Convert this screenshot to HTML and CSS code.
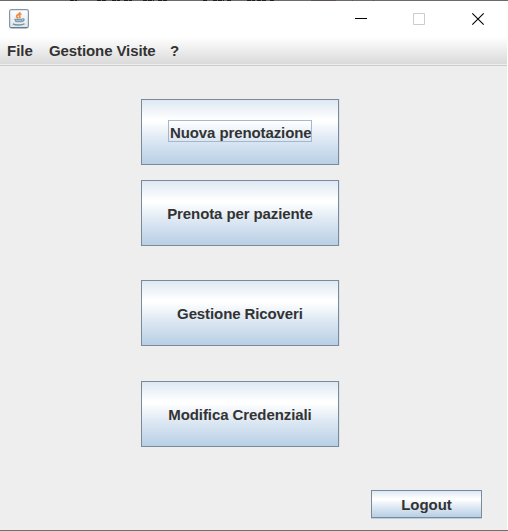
FILE: index.html
```html
<!DOCTYPE html>
<html lang="it">
<head>
<meta charset="utf-8">
<title>Gestione Visite</title>
<link rel="stylesheet" href="styles.css">
</head>
<body>
<div class="window">
  <svg class="top-edge" width="508" height="1" viewBox="0 0 508 1">
    <path d="M0 .5h508" stroke="#6d6a6b"/>
    <path d="M70 .5h7M97 .5h10M112 .5h8M124 .5h8M143 .5h11M158 .5h9M203 .5h4M213 .5h11M227 .5h4M247 .5h8M257 .5h10M270 .5h5" stroke="#211d20" stroke-dasharray="4 1"/>
    <path d="M311 .5h25M352 .5h1M373 .5h1" stroke="#5a5153"/>
  </svg>
  <header class="titlebar">
    <svg class="app-icon" width="20" height="20" viewBox="0 0 20 20">
      <defs><linearGradient id="tile" x2="0" y2="1"><stop offset="0" stop-color="#fff"/><stop offset="1" stop-color="#dfe5e9"/></linearGradient></defs>
      <rect x=".6" y=".6" width="18.8" height="18.3" rx="1.8" fill="url(#tile)" stroke="#8298a9" stroke-width="1.2"/>
      <path d="M1.5 18.6h17" stroke="#5e788c" stroke-width="1"/>
      <path d="M10.800 3c1 2-3.300 2.600-3.300 4.300 0 1 1.500 1.300 1.700 2.200M12.500 5c-2.500 1-2.500 1.800-1.700 2.500.5.700.2 1.200-.4 1.700" fill="none" stroke="#ee8b45" stroke-width="1.600"/>
      <path d="M5 9.800h8.500l-1 3.400h-6z" fill="#7e9bb0"/>
      <path d="M13.300 10c2.800-.7 2 2.300-.8 2.500M3.800 14.800c2.500 1.600 9.500 1.600 11.700 0" fill="none" stroke="#7893a8" stroke-width="1.400"/>
      <path d="M7 11.500h5" stroke="#a9bdcb"/>
    </svg>
    <svg class="controls" width="124" height="14" viewBox="0 0 124 14" fill="none">
      <path d="M0 6.500h12" stroke="#000"/>
      <path d="M58.500 1.500h11v11h-11z" stroke="#ccc"/>
      <path d="M117.300 1.300l11.400 11.400M128.700 1.300l-11.400 11.400" stroke="#000" stroke-width="1.100"/>
    </svg>
  </header>
  <nav class="menubar"><span class="menu-file">File</span><span class="menu-visits">Gestione Visite</span><span>?</span></nav>
  <main class="content">
    <button class="btn first"><span class="focus">Nuova prenotazione</span></button>
    <button class="btn second"><span>Prenota per paziente</span></button>
    <button class="btn third"><span>Gestione Ricoveri</span></button>
    <button class="btn fourth"><span>Modifica Credenziali</span></button>
    <button class="btn logout"><span>Logout</span></button>
  </main>
</div>
</body>
</html>
```
FILE: styles.css
```css
* { box-sizing: border-box; }
body { margin: 0; background: #fff; overflow: hidden; }
.window {
  width: 508px; height: 531px;
  display: flex; flex-direction: column;
  border-bottom: 1px solid #707070;
  font: bold 15px/20px "Liberation Sans", Arial, sans-serif;
  color: #333;
}
.top-edge { display: block; flex: none; }
.titlebar { height: 36px; flex: none; display: flex; justify-content: space-between; padding: 8px 24px 0 9px; }
.controls { margin-top: 3px; margin-right: 5px; overflow: visible; }
.menubar {
  height: 29px; flex: none; display: flex; padding: 4px 7px 0; margin-right: 1px;
  background: linear-gradient(#fff, #dadada 27px, #eee 27px, #eee 28px, #ccc 28px);
}
.menu-file { width: 42px; }
.menu-visits { width: 121px; letter-spacing: -.1px; }
.content {
  flex: 1; background: #eee; margin-right: 1px;
  display: flex; flex-direction: column; align-items: flex-start;
  padding: 33px 25px 0 141px;
}
.btn {
  width: 198px; height: 66px; flex: none;
  margin: 0; padding: 2px 0 0;
  display: flex; align-items: center; justify-content: center;
  border: 1px solid #7a8a99; border-radius: 0;
  background: linear-gradient(#dde8f3, #fff 30%, #fff 33%, #dde8f3 62%, #b8cfe5);
  box-shadow: 1px 0 #dbe4ed;
  font: inherit; color: inherit; white-space: nowrap; letter-spacing: -.1px;
}
.first { padding: 0 0 2px; }
.focus { outline: 1px solid #a3b8cc; height: 20px; width: 142px; line-height: 24px; text-align: left; padding-left: 1px; }
.second { margin-top: 15px; }
.third { margin-top: 34px; }
.fourth { margin-top: 35px; letter-spacing: -.08px; }
.logout { width: 111px; height: 28px; margin-top: 43px; align-self: flex-end; box-shadow: 0 1px #b8cfe5; letter-spacing: -.05px; }
```
